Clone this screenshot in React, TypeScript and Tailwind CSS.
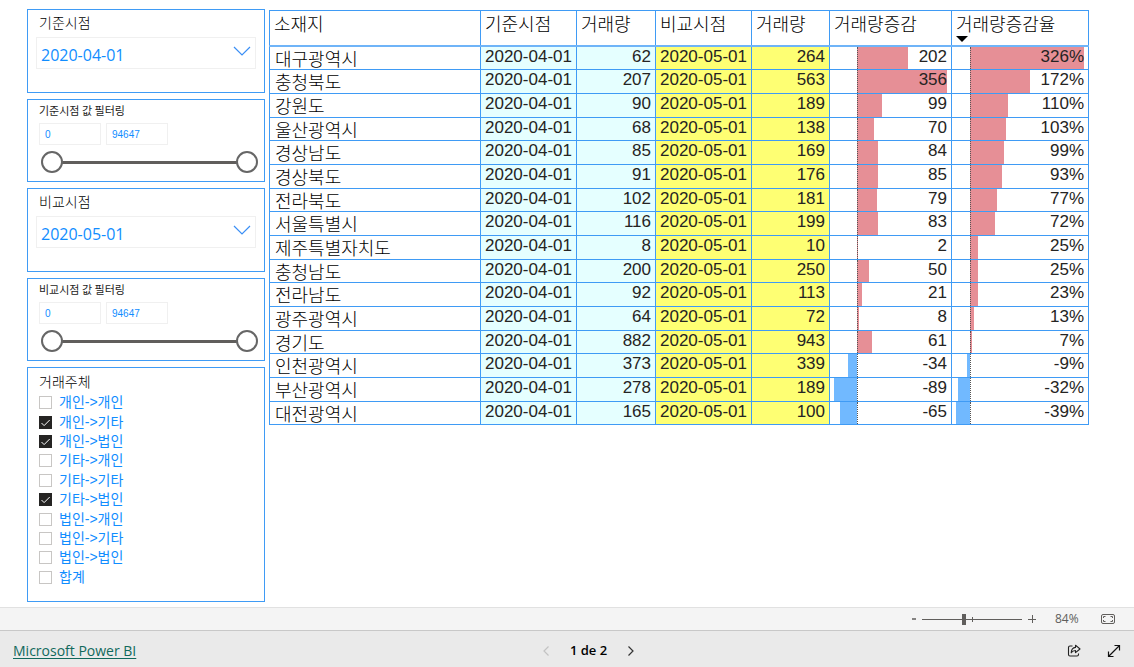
import { useState } from 'react';

type Row = {
  region: string;
  base: number;
  compare: number;
  diff: number;
  rate: number;
};

const rows: Row[] = [
  { region: '대구광역시', base: 62, compare: 264, diff: 202, rate: 326 },
  { region: '충청북도', base: 207, compare: 563, diff: 356, rate: 172 },
  { region: '강원도', base: 90, compare: 189, diff: 99, rate: 110 },
  { region: '울산광역시', base: 68, compare: 138, diff: 70, rate: 103 },
  { region: '경상남도', base: 85, compare: 169, diff: 84, rate: 99 },
  { region: '경상북도', base: 91, compare: 176, diff: 85, rate: 93 },
  { region: '전라북도', base: 102, compare: 181, diff: 79, rate: 77 },
  { region: '서울특별시', base: 116, compare: 199, diff: 83, rate: 72 },
  { region: '제주특별자치도', base: 8, compare: 10, diff: 2, rate: 25 },
  { region: '충청남도', base: 200, compare: 250, diff: 50, rate: 25 },
  { region: '전라남도', base: 92, compare: 113, diff: 21, rate: 23 },
  { region: '광주광역시', base: 64, compare: 72, diff: 8, rate: 13 },
  { region: '경기도', base: 882, compare: 943, diff: 61, rate: 7 },
  { region: '인천광역시', base: 373, compare: 339, diff: -34, rate: -9 },
  { region: '부산광역시', base: 278, compare: 189, diff: -89, rate: -32 },
  { region: '대전광역시', base: 165, compare: 100, diff: -65, rate: -39 },
];

const headers = ['소재지', '기준시점', '거래량', '비교시점', '거래량', '거래량증감', '거래량증감율'];

const parties: [string, boolean][] = [
  ['개인->개인', false],
  ['개인->기타', true],
  ['개인->법인', true],
  ['기타->개인', false],
  ['기타->기타', false],
  ['기타->법인', true],
  ['법인->개인', false],
  ['법인->기타', false],
  ['법인->법인', false],
  ['합계', false],
];

const MAX = 94647;

function DatePanel({ id, title, value }: { id: string; title: string; value: string }) {
  return (
    <section className="h-[84px] border border-[#3f9bf5] px-2 pt-0.5">
      <label htmlFor={id} className="block pl-[3px] text-sm leading-5 font-light text-black">
        {title}
      </label>
      <div className="mt-[5px] grid h-8 items-center border border-[#f0f0f0]">
        <select
          id={id}
          defaultValue={value}
          className="col-start-1 row-start-1 h-full w-full appearance-none bg-transparent pl-1 pt-[3px] font-['Open_Sans','Noto_Sans',sans-serif] text-base text-[#118dff] outline-none"
        >
          <option>{value}</option>
        </select>
        <svg
          viewBox="0 0 18 10"
          className="pointer-events-none col-start-1 row-start-1 mr-1 mb-1 h-[10px] w-[18px] justify-self-end"
          fill="none"
          stroke="#3b8ff5"
          strokeWidth="1.2"
        >
          <path d="M1 1l8 8 8-8" />
        </svg>
      </div>
    </section>
  );
}

const thumb =
  'pointer-events-none col-start-1 row-start-1 h-[22px] w-full appearance-none bg-transparent outline-none [&::-webkit-slider-thumb]:pointer-events-auto [&::-webkit-slider-thumb]:size-[22px] [&::-webkit-slider-thumb]:appearance-none [&::-webkit-slider-thumb]:rounded-full [&::-webkit-slider-thumb]:border-2 [&::-webkit-slider-thumb]:border-[#666] [&::-webkit-slider-thumb]:bg-white';

const numberBox =
  'h-[22px] w-[62px] border border-[#f0f0f0] pl-[5px] text-[10px] text-[#118dff] outline-none font-["Liberation_Sans",Arial,sans-serif]';

function RangePanel({ title }: { title: string }) {
  const [low, setLow] = useState(0);
  const [high, setHigh] = useState(MAX);
  return (
    <section className="h-[83px] border border-[#3f9bf5] pt-0.5 pr-1.5 pl-[11px]">
      <h2 className="text-[11px] leading-4 text-[#252423]">{title}</h2>
      <div className="mt-[5px] flex gap-[5px]">
        <input
          aria-label={`${title} 최소`}
          className={numberBox}
          value={low}
          onChange={(e) => setLow(Number(e.target.value) || 0)}
        />
        <input
          aria-label={`${title} 최대`}
          className={numberBox}
          value={high}
          onChange={(e) => setHigh(Number(e.target.value) || 0)}
        />
      </div>
      <div className="mt-1.5 ml-0.5 grid items-center">
        <div className="col-start-1 row-start-1 mx-3 h-[3px] bg-[#605e5c]" />
        <input
          type="range"
          aria-label={`${title} 최소 슬라이더`}
          className={thumb}
          min={0}
          max={MAX}
          value={low}
          onChange={(e) => setLow(Number(e.target.value))}
        />
        <input
          type="range"
          aria-label={`${title} 최대 슬라이더`}
          className={thumb}
          min={0}
          max={MAX}
          value={high}
          onChange={(e) => setHigh(Number(e.target.value))}
        />
      </div>
    </section>
  );
}

function PartyPanel() {
  return (
    <section
      role="group"
      aria-labelledby="party-title"
      className="h-[235px] border border-[#3f9bf5] pt-[3px] pl-[11px]"
    >
      <h2 id="party-title" className="text-sm leading-5 font-light text-black">
        거래주체
      </h2>
      <div className="mt-0.5 flex h-[194px] flex-col">
        {parties.map(([name, checked]) => (
          <label
            key={name}
            className="flex flex-1 items-center gap-[7px] font-['Liberation_Sans','Noto_Sans_CJK_KR',sans-serif] text-sm leading-[19px] text-[#118dff]"
          >
            <span className="grid size-[13px] items-center justify-items-center">
              <input
                type="checkbox"
                defaultChecked={checked}
                className="peer col-start-1 row-start-1 size-[13px] appearance-none border border-[#c8c6c4] bg-white checked:border-[#252423] checked:bg-[#252423]"
              />
              <svg
                viewBox="0 0 13 13"
                className="pointer-events-none col-start-1 row-start-1 hidden size-[13px] peer-checked:block"
                fill="none"
                stroke="#fff"
              >
                <path d="M2.5 7l2.6 2.6 5.6-5.6" />
              </svg>
            </span>
            {name}
          </label>
        ))}
      </div>
    </section>
  );
}

function BarCell({ value, min, max, suffix = '' }: { value: number; min: number; max: number; suffix?: string }) {
  const span = max - min;
  const zero = (-min / span) * 100;
  const size = (Math.abs(value) / span) * 100;
  const left = value < 0 ? zero - size : zero;
  return (
    <td className={`relative ${cell} pr-1 text-right`}>
      <div className="absolute inset-y-0 right-1 left-1">
        <div
          className={`absolute inset-y-0 ${value < 0 ? 'bg-[#71b9ff]' : 'bg-[#e68f96]'}`}
          style={{ left: `${left}%`, width: `${size}%` }}
        />
        <div className="absolute inset-y-0 border-l border-dotted border-[#555]" style={{ left: `${zero}%` }} />
      </div>
      <span className="relative">
        {value}
        {suffix}
      </span>
    </td>
  );
}

const cell =
  'border border-[#3f9bf5] p-0 align-top font-["Liberation_Sans",Arial,sans-serif] text-[17px] leading-5 text-[#252423]';

function RegionTable() {
  return (
    <table className="w-full table-fixed border-collapse">
      <colgroup>
        <col className="w-[211px]" />
        <col className="w-[96px]" />
        <col className="w-[79px]" />
        <col className="w-[96px]" />
        <col className="w-[78px]" />
        <col className="w-[122px]" />
        <col className="w-[137px]" />
      </colgroup>
      <thead>
        <tr className="h-[35px]">
          {headers.map((h, i) => (
            <th
              key={i}
              scope="col"
              aria-sort={i === 6 ? 'descending' : undefined}
              className="border border-b-2 border-[#3f9bf5] border-b-[#6fb4f8] p-0 text-left align-top font-light text-black"
            >
              <button type="button" className="block pl-1 text-left text-lg leading-6">
                {h}
                {i === 6 && (
                  <svg viewBox="0 0 12 6" className="mt-px block h-1.5 w-3" fill="#000">
                    <path d="M0 0h12L6 6z" />
                  </svg>
                )}
              </button>
            </th>
          ))}
        </tr>
      </thead>
      <tbody>
        {rows.map((r) => (
          <tr key={r.region} className="h-6 nth-[3n+1]:h-[23px]">
            <td className="border border-[#3f9bf5] py-0 pr-0 pl-[5px] align-top text-lg leading-[22px] font-light text-black">
              {r.region}
            </td>
            <td className={`${cell} bg-[#e5ffff] pl-1`}>2020-04-01</td>
            <td className={`${cell} bg-[#e5ffff] pr-1 text-right`}>{r.base}</td>
            <td className={`${cell} bg-[#feff73] pl-1`}>2020-05-01</td>
            <td className={`${cell} bg-[#feff73] pr-1 text-right`}>{r.compare}</td>
            <BarCell value={r.diff} min={-89} max={356} />
            <BarCell value={r.rate} min={-39} max={326} suffix="%" />
          </tr>
        ))}
      </tbody>
    </table>
  );
}

function ZoomBar() {
  const [zoom, setZoom] = useState(84);
  return (
    <div className="flex h-[23px] items-center justify-end border-t border-[#e1e1e1] bg-[#f4f4f4] pr-[18px] text-[#605e5c]">
      <button type="button" aria-label="축소" className="flex h-4 w-4 items-center justify-center">
        <svg viewBox="0 0 10 10" className="size-[10px]" stroke="#605e5c" strokeWidth="1.5">
          <path d="M3 5h4" />
        </svg>
      </button>
      <div className="grid w-[100px] items-center">
        <div className="col-start-1 row-start-1 h-px bg-[#605e5c]" />
        <div className="col-start-1 row-start-1 h-[5px] w-px justify-self-center bg-[#605e5c]" />
        <input
          type="range"
          aria-label="확대/축소"
          min={0}
          max={200}
          value={zoom}
          onChange={(e) => setZoom(Number(e.target.value))}
          className="col-start-1 row-start-1 h-[11px] w-full appearance-none bg-transparent outline-none [&::-webkit-slider-thumb]:h-[11px] [&::-webkit-slider-thumb]:w-1 [&::-webkit-slider-thumb]:appearance-none [&::-webkit-slider-thumb]:bg-[#605e5c]"
        />
      </div>
      <button type="button" aria-label="확대" className="ml-1 flex h-4 w-3 items-center justify-center">
        <svg viewBox="0 0 8 8" className="size-2" stroke="#605e5c">
          <path d="M0 4.5h8M4.5 0v8" />
        </svg>
      </button>
      <span className="ml-[17px] w-[46px] text-xs">{zoom}%</span>
      <button type="button" aria-label="페이지에 맞추기">
        <svg viewBox="0 0 15 11" className="h-[11px] w-[15px]" fill="none" stroke="#605e5c">
          <rect x="0.5" y="0.5" width="13" height="9" rx="1.5" />
          <path d="M4.500 2.500h-2v1.500M9.500 2.500h2v1.500M4.500 7.500h-2v-1.500M9.500 7.500h2v-1.500" />
        </svg>
      </button>
    </div>
  );
}

function Footer() {
  return (
    <footer className="grid h-[37px] grid-cols-[1fr_auto_1fr] items-center border-t border-[#c8c8c8] bg-[#eaeaea] pt-[3px] pr-[13px] pl-[13px] text-sm">
      <a href="#powerbi" className="justify-self-start text-[#11695c] underline underline-offset-2">
        Microsoft Power BI
      </a>
      <nav aria-label="페이지" className="mr-[-43px] flex items-center">
        <button type="button" aria-label="이전 페이지" disabled>
          <svg viewBox="0 0 6 10" className="h-[10px] w-1.5" fill="none" stroke="#c3c3c3" strokeWidth="1.2">
            <path d="M5.500.5L1 5l4.500 4.500" />
          </svg>
        </button>
        <span className="mx-[21px] text-[13px] font-semibold text-black">1 de 2</span>
        <button type="button" aria-label="다음 페이지">
          <svg viewBox="0 0 6 10" className="h-[10px] w-1.5" fill="none" stroke="#333" strokeWidth="1.2">
            <path d="M.5.5L5 5 .5 9.500" />
          </svg>
        </button>
      </nav>
      <div className="flex items-center gap-[26px] justify-self-end">
        <button type="button" aria-label="공유">
          <svg viewBox="0 0 14 14" className="size-[14px]" fill="none" stroke="#222" strokeWidth="1.1" strokeLinejoin="round">
            <path d="M5.500 2H3a1.500 1.500 0 0 0-1.500 1.500v7A1.500 1.500 0 0 0 3 12h7a1.500 1.500 0 0 0 1.500-1.500V9.500" />
            <path d="M8.500 1.200l4.500 3.800-4.500 3.700V6.500C6.500 6.500 5.200 7.200 4.200 8.800 4.400 5.500 6 3.600 8.500 3.400z" />
          </svg>
        </button>
        <button type="button" aria-label="전체 화면">
          <svg viewBox="0 0 14 14" className="size-[14px]" fill="none" stroke="#111" strokeWidth="1.2">
            <path d="M1.500 12.500l11-11M7.500 1.500h5v5M1.500 7.500v5h5" />
          </svg>
        </button>
      </div>
    </footer>
  );
}

export default function App() {
  return (
    <div className="flex min-h-screen flex-col bg-white font-['Open_Sans','Noto_Sans_CJK_KR',sans-serif]">
      <main className="flex flex-1 gap-1 pt-[9px] pr-[45px] pb-[5px] pl-[27px] font-['Noto_Sans_CJK_KR',sans-serif]">
        <aside className="flex w-[238px] shrink-0 flex-col gap-1.5">
          <DatePanel id="base-date" title="기준시점" value="2020-04-01" />
          <RangePanel title="기준시점 값 필터링" />
          <DatePanel id="compare-date" title="비교시점" value="2020-05-01" />
          <RangePanel title="비교시점 값 필터링" />
          <PartyPanel />
        </aside>
        <div className="min-w-0 flex-1 pt-px">
          <RegionTable />
        </div>
      </main>
      <ZoomBar />
      <Footer />
    </div>
  );
}
